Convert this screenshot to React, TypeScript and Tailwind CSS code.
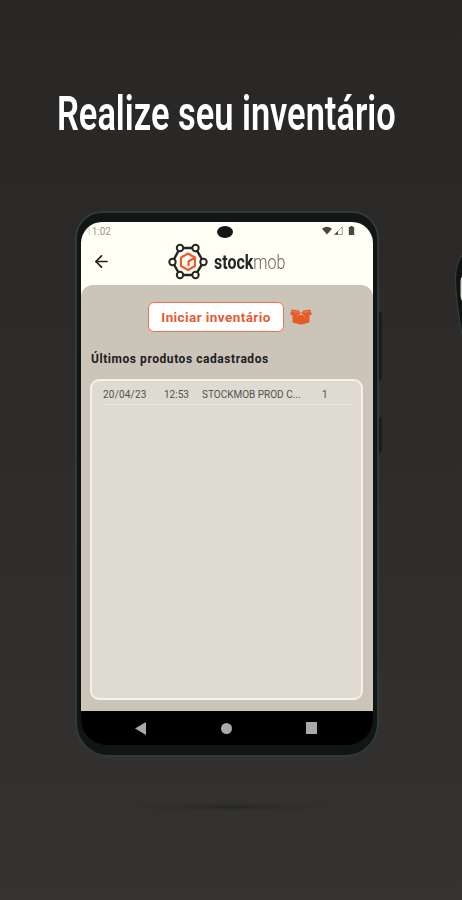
import { ArrowLeft } from "lucide-react";

const products = [
  { date: "20/04/23", time: "12:53", name: "STOCKMOB PROD C...", qty: 1 },
];

function Logo() {
  const nodes = [
    [12, 5],
    [27.5, 5],
    [35.5, 19],
    [27.5, 32],
    [12, 32],
    [4.5, 19],
  ];

  return (
    <svg width="40" height="37" viewBox="0 0 40 37" fill="none">
      <path d="M12 5h15.5l8 14-8 13H12L4.500 19z" stroke="#252522" strokeWidth="2.4" />
      {nodes.map(([x, y]) => (
        <circle key={`${x}-${y}`} cx={x} cy={y} r="3.2" fill="#fffff5" stroke="#252522" strokeWidth="2" />
      ))}
      <path
        d="M27 14.5 20 10.500l-7 4v8.500l7 4 7-4v-8.500l-6.500 4V23"
        stroke="#f05a2b"
        strokeWidth="2.1"
        strokeLinejoin="round"
      />
    </svg>
  );
}

function StatusBar() {
  return (
    <div className="relative flex h-[20px] items-center justify-between pl-[5px] pr-[18px]">
      <span className="text-[10px] leading-none text-[#99988f]">
        <span className="opacity-40">1</span>1:02
      </span>
      <div className="-mt-[3px] flex items-center gap-[2px] text-[#484843]">
        <svg width="10" height="9" viewBox="0 0 11 9">
          <path d="M0 2.500Q5.500-2 11 2.500L5.500 9z" fill="currentColor" />
        </svg>
        <svg width="9" height="9" viewBox="0 0 9 9" fill="none">
          <path d="M.7 8.500 8.300.8v7.700z" stroke="#85857d" strokeWidth=".8" />
          <path d="M.5 8.700 4 5v3.700z" fill="currentColor" />
        </svg>
        <svg width="7" height="9" viewBox="0 0 7 9" className="ml-[3px]">
          <path d="M2.300 0h2.400v1h1.500v8H.8V1h1.500z" fill="currentColor" />
        </svg>
      </div>
      <div className="absolute left-[136px] top-[4px] h-[12px] w-[16px] rounded-[50%] bg-[#161615]" />
    </div>
  );
}

function Header() {
  return (
    <header className="flex h-[43px] items-start">
      <ArrowLeft size={19} strokeWidth={2.2} className="ml-[11px] mt-[10px] text-[#20201e]" />
      <div className="ml-[57px] mt-px flex items-center">
        <Logo />
        <div className="ml-[6px] w-[73px] origin-left scale-x-[0.8] whitespace-nowrap text-[20px] leading-none text-[#252522]">
          <span className="font-bold">stock</span>
          <span className="font-light text-[#66665f]">mob</span>
        </div>
      </div>
    </header>
  );
}

function OpenBox() {
  return (
    <svg width="22" height="16" viewBox="0 0 22 16" fill="#e85b25">
      <path d="M2.500 6h17v7.500L11 15.800 2.500 13.500z" />
      <path d="M2 .5 8.500 1.500 11 4l2.500-2.500L20 .5l2 5-7.500 2L11 4 7.500 7.500 0 5.500z" />
      <path d="M7 7.500 11 4l4 3.500" stroke="#dba386" strokeWidth=".8" fill="none" />
      <path d="M3 2.500l5.500.8M19 2.500l-5.500.8" stroke="#e59b78" strokeWidth=".7" />
    </svg>
  );
}

function Phone() {
  return (
    <div className="relative h-[546px] w-[304px] rounded-[27px] rounded-b-[34px] border-2 border-[#303a38] bg-[#111615] px-[4px] pt-[9px]">
      <div className="absolute -right-[5px] top-[99px] h-[68px] w-[3px] rounded-r bg-[#1b1c1b]" />
      <div className="absolute -right-[5px] top-[204px] h-[36px] w-[3px] rounded-r bg-[#1b1c1b]" />
      <div className="flex h-[523px] w-[292px] flex-col">
        <div className="rounded-t-[21px] bg-[#fffff5]">
          <StatusBar />
          <Header />
          <main className="flex h-[426px] flex-col rounded-t-[12px] bg-[#cbc4b8] px-[9px] pt-[17px]">
            <div className="flex items-center gap-[6px] pl-[58px]">
              <button className="flex h-[30px] w-[136px] items-center justify-center rounded-[6px] border-[1.5px] border-[#ed714d] bg-white text-[13.5px] font-bold tracking-[0.42px] text-[#e75b30]">
                Iniciar inventário
              </button>
              <OpenBox />
            </div>
            <h2 className="mt-[19px] whitespace-nowrap pl-[1px] text-[12px] font-bold leading-[16px] tracking-[0.56px] text-[#20201d]">
              Últimos produtos cadastrados
            </h2>
            <section className="mt-[12px] h-[321px] w-[273px] rounded-[9px] border-2 border-[#f5f2e8] bg-[#dedbd3] px-[10px]">
              {products.map((product) => (
                <div
                  key={product.date}
                  className="flex h-[24px] items-center whitespace-nowrap border-b border-[#eae7df] pt-[4px] text-[10px] text-[#53514c]"
                >
                  <span className="w-[62px] pl-[1px] tracking-[0.2px]">{product.date}</span>
                  <span className="w-[38px]">{product.time}</span>
                  <span className="w-[120px]">{product.name}</span>
                  <span>{product.qty}</span>
                </div>
              ))}
            </section>
          </main>
        </div>
        <nav className="flex h-[34px] items-center rounded-b-[26px] bg-black pl-[54px]">
          <svg width="12" height="13" viewBox="0 0 12 13">
            <path d="M0 6.500 11 0v13z" fill="#aaa" />
          </svg>
          <div className="ml-[74px] h-[11px] w-[11px] rounded-full bg-[#aaa]" />
          <div className="ml-[74px] h-[12px] w-[11px] bg-[#aaa]" />
        </nav>
      </div>
    </div>
  );
}

export default function App() {
  return (
    <div className="relative flex h-[900px] w-[462px] flex-col overflow-hidden bg-linear-to-b from-[#282726] via-[#2d2c2b] to-[#353331] font-['Roboto',sans-serif]">
      <h1 className="ml-[57px] mt-[84px] w-[350px] origin-left scale-x-[0.717] whitespace-nowrap text-[48px] font-semibold leading-[60px] text-white">
        Realize seu inventário
      </h1>
      <div className="ml-[75px] mt-[67px]">
        <Phone />
      </div>
      <div className="ml-[132px] mt-[48px] h-[4px] w-[200px] rounded-[50%] bg-linear-to-r from-transparent via-[#272725] to-transparent blur-[1px]" />
      <svg className="absolute right-0 top-[250px]" width="8" height="90" viewBox="0 0 8 90">
        <path d="M9 4Q1.500 13 1.500 29 1.500 50 9 90z" fill="#101413" stroke="#394240" />
        <path d="M8 27q-1.500 0-1.500 6v11q0 5 1.500 7z" fill="#d8d8d1" />
      </svg>
    </div>
  );
}
